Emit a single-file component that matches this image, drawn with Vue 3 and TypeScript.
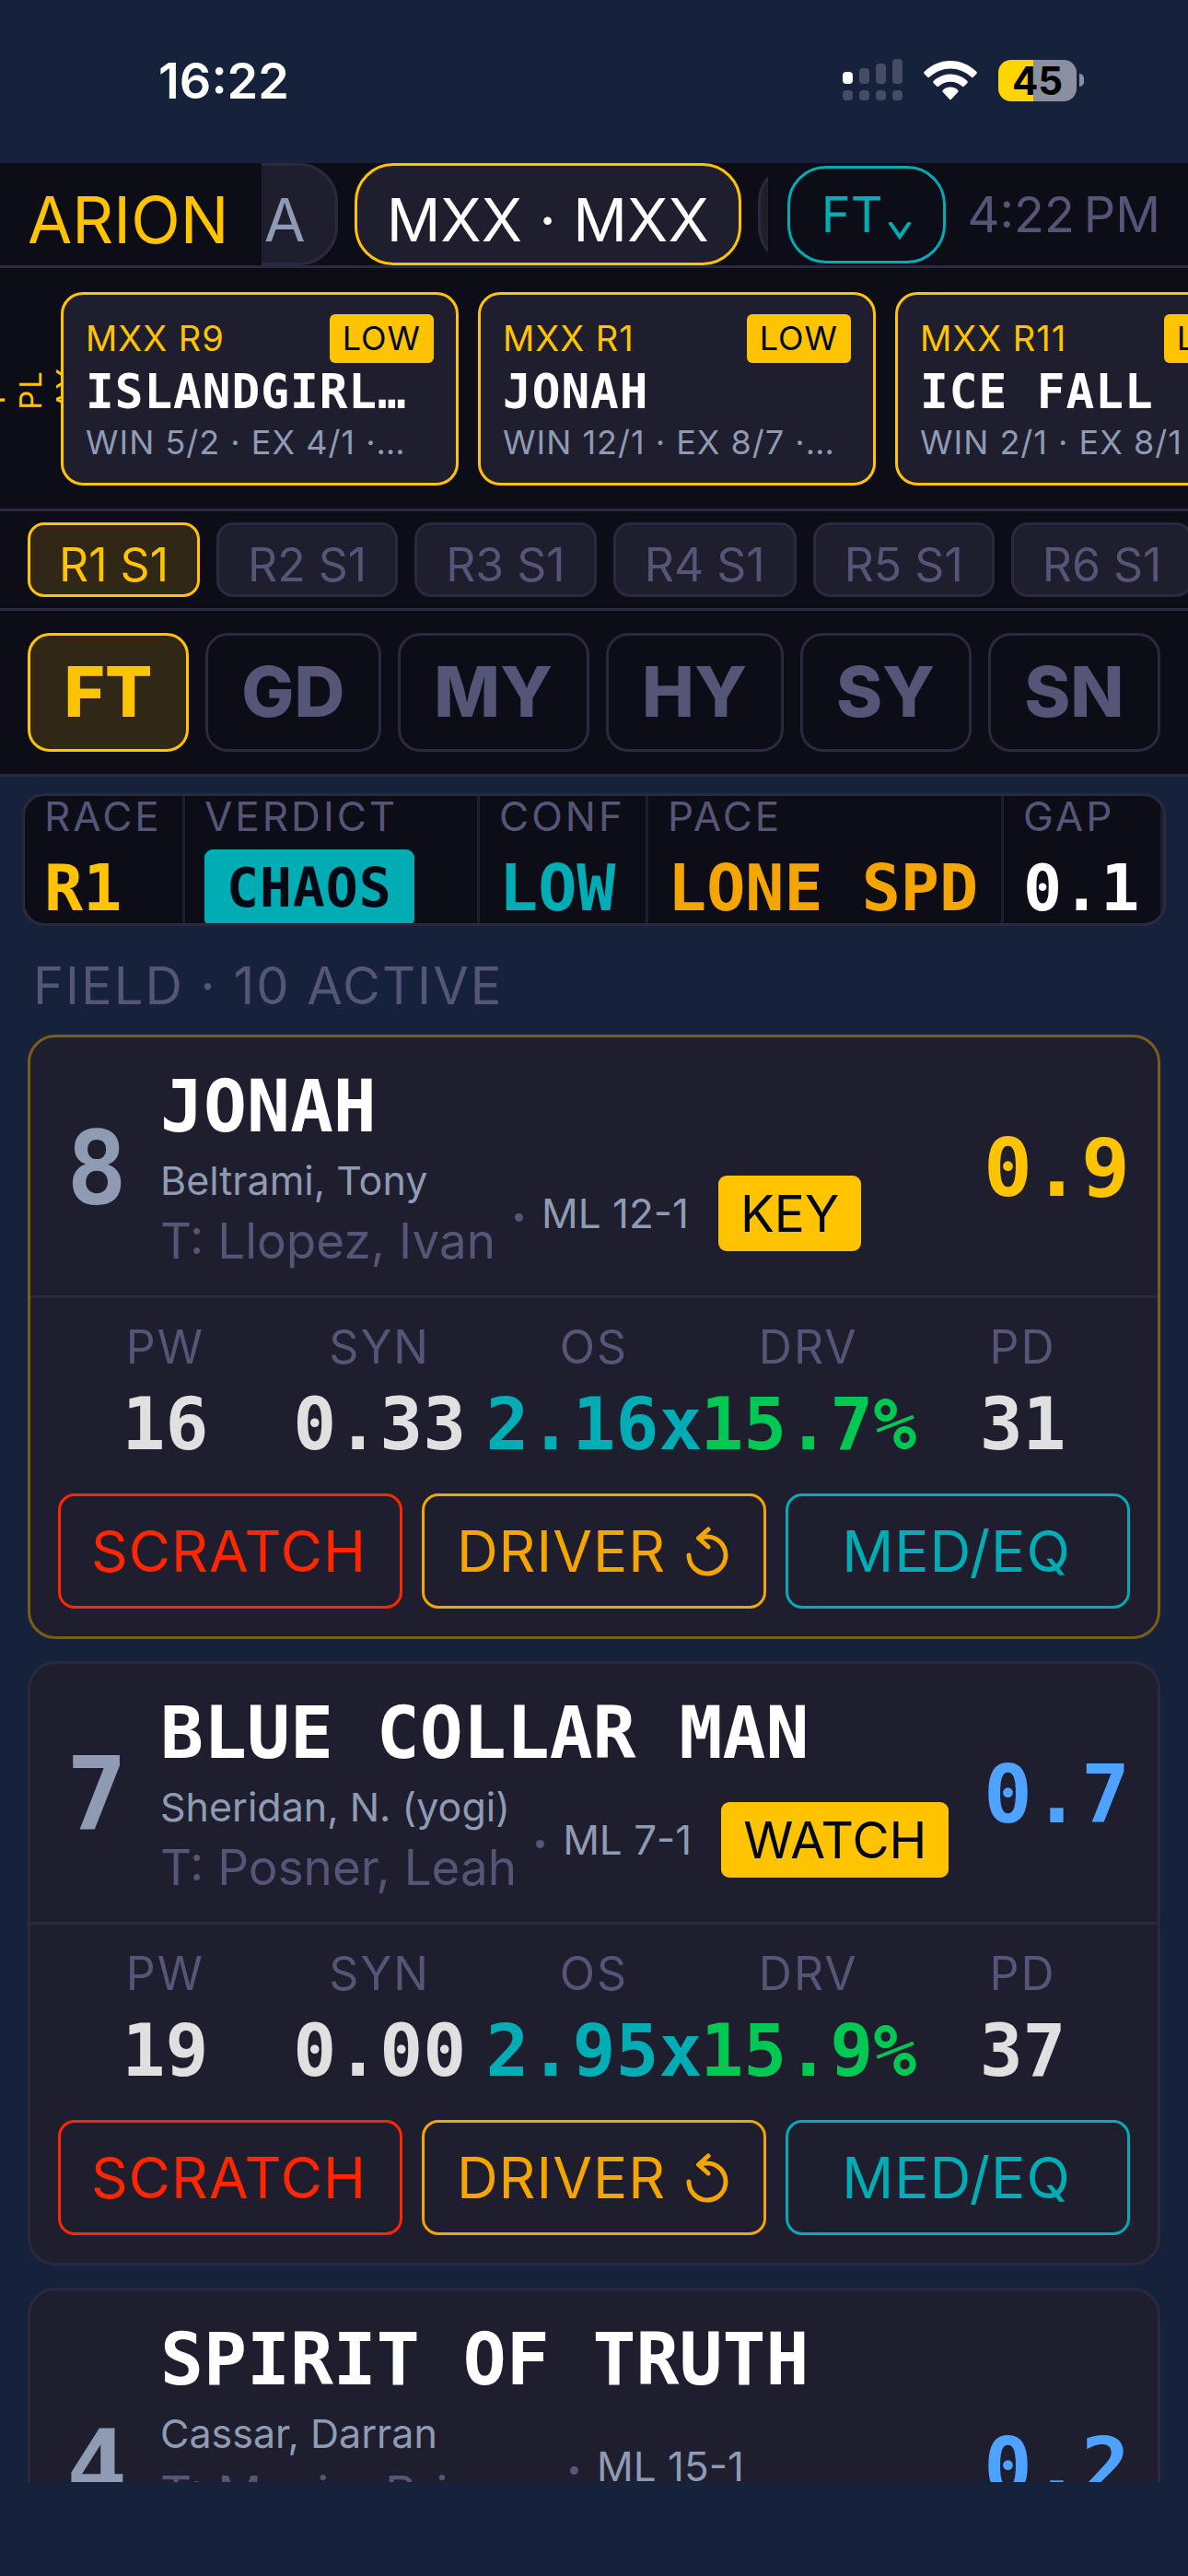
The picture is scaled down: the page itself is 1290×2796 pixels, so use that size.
<script setup lang="ts">
interface Pick { race: string; name: string; bet: string }
interface Horse {
  num: number; name: string; driver: string; trainer: string; ml: string; tag: string
  score: string; lead: boolean; pw: string; syn: string; os: string; drv: string; pd: string
}

const picks: Pick[] = [
  { race: 'MXX R9', name: 'ISLANDGIRL…', bet: 'WIN 5/2 · EX 4/1 ·…' },
  { race: 'MXX R1', name: 'JONAH', bet: 'WIN 12/1 · EX 8/7 ·…' },
  { race: 'MXX R11', name: 'ICE FALL', bet: 'WIN 2/1 · EX 8/1 ·…' },
]
const races = ['R1 S1', 'R2 S1', 'R3 S1', 'R4 S1', 'R5 S1', 'R6 S1']
const conditions = ['FT', 'GD', 'MY', 'HY', 'SY', 'SN']
const horses: Horse[] = [
  { num: 8, name: 'JONAH', driver: 'Beltrami, Tony', trainer: 'Llopez, Ivan', ml: '12-1', tag: 'KEY', score: '0.9', lead: true, pw: '16', syn: '0.33', os: '2.16x', drv: '15.7%', pd: '31' },
  { num: 7, name: 'BLUE COLLAR MAN', driver: 'Sheridan, N. (yogi)', trainer: 'Posner, Leah', ml: '7-1', tag: 'WATCH', score: '0.7', lead: false, pw: '19', syn: '0.00', os: '2.95x', drv: '15.9%', pd: '37' },
  { num: 4, name: 'SPIRIT OF TRUTH', driver: 'Cassar, Darran', trainer: 'Macie, Briarna', ml: '15-1', tag: 'WATCH', score: '0.2', lead: false, pw: '14', syn: '0.00', os: '1.80x', drv: '12.4%', pd: '28' },
]
</script>

<template>
  <div class="app">
    <div class="status">
      <span class="clock">16:22</span>
      <div class="indicators">
        <svg class="signal" width="66" height="46" viewBox="0 0 66 46" fill="#454d64">
          <rect x="0" y="14" width="11" height="13" rx="4" fill="#fff" />
          <rect x="18" y="10" width="11" height="17" rx="4" />
          <rect x="36" y="5" width="11" height="22" rx="4" />
          <rect x="54" y="0" width="11" height="27" rx="4" />
          <rect x="0" y="34" width="11" height="11" rx="4" />
          <rect x="18" y="34" width="11" height="11" rx="4" />
          <rect x="36" y="34" width="11" height="11" rx="4" />
          <rect x="54" y="34" width="11" height="11" rx="4" />
        </svg>
        <svg class="wifi" width="58" height="43" viewBox="0 0 58 43" fill="#fff">
          <path d="M29 0C40 0 50 4.500 57.300 11.800Q58.400 13 57.300 14.200L53.800 17.700Q52.800 18.600 51.700 17.600A33 33 0 0 0 6.300 17.600Q5.200 18.600 4.200 17.700L0.700 14.200Q-.4 13 .7 11.800C8 4.500 18 0 29 0Z" />
          <path d="M29 14.500C36 14.500 42.500 17.300 47.300 21.900Q48.400 23 47.300 24.200L43.700 27.700Q42.700 28.600 41.600 27.600A19 19 0 0 0 16.400 27.600Q15.300 28.600 14.300 27.700L10.700 24.200Q9.600 23 10.700 21.900C15.500 17.300 22 14.500 29 14.500Z" />
          <path d="M29 28.500C32 28.500 35 29.700 37.100 31.700Q38.300 32.900 37.100 34.100L30.200 41.600Q29 42.700 27.800 41.600L20.900 34.100Q19.700 32.900 20.900 31.700C23 29.700 26 28.500 29 28.500Z" />
        </svg>
        <div class="battery"><span class="cell">45</span><i class="nub"></i></div>
      </div>
    </div>

    <header class="top">
      <span class="brand">ARION</span>
      <nav class="tracks">
        <button class="track">MXX · A</button>
        <button class="track on">MXX · MXX</button>
        <button class="track">MXX</button>
      </nav>
      <button class="surface">FT<svg width="26" height="20" viewBox="0 0 26 20" fill="none" stroke="currentColor" stroke-width="4"><path d="M2 0 13 16 24 0" /></svg></button>
      <span class="now">4:22&#8201;PM</span>
    </header>

    <section class="picks">
      <div class="best"><span>T<br>PL<br>AY</span></div>
      <article v-for="p in picks" :key="p.race" class="pick">
        <div class="pick-top"><span>{{ p.race }}</span><b>LOW</b></div>
        <h3>{{ p.name }}</h3>
        <p>{{ p.bet }}</p>
      </article>
    </section>

    <nav class="races">
      <button v-for="(r, i) in races" :key="r" :class="{ on: i === 0 }">{{ r }}</button>
    </nav>

    <nav class="conditions">
      <button v-for="(c, i) in conditions" :key="c" :class="{ on: i === 0 }">{{ c }}</button>
    </nav>

    <section class="summary">
      <div><small>RACE</small><strong class="gold">R1</strong></div>
      <div><small>VERDICT</small><strong class="chaos">CHAOS</strong></div>
      <div><small>CONF</small><strong class="teal">LOW</strong></div>
      <div><small>PACE</small><strong class="orange">LONE SPD</strong></div>
      <div><small>GAP</small><strong>0.1</strong></div>
    </section>

    <h2 class="field">FIELD · 10 ACTIVE</h2>

    <main class="list">
      <article v-for="h in horses" :key="h.num" class="horse" :class="{ lead: h.lead }">
        <div class="head">
          <span class="num">{{ h.num }}</span>
          <div class="info">
            <h3>{{ h.name }}</h3>
            <div class="meta">
              <div class="people">
                <span class="driver">{{ h.driver }}</span>
                <span class="trainer">T: {{ h.trainer }}</span>
              </div>
              <i class="dot"></i>
              <span class="ml">ML {{ h.ml }}</span>
              <span class="tag">{{ h.tag }}</span>
            </div>
          </div>
          <span class="score">{{ h.score }}</span>
        </div>
        <dl class="stats">
          <div><dt>PW</dt><dd>{{ h.pw }}</dd></div>
          <div><dt>SYN</dt><dd>{{ h.syn }}</dd></div>
          <div><dt>OS</dt><dd class="teal">{{ h.os }}</dd></div>
          <div><dt>DRV</dt><dd class="green">{{ h.drv }}</dd></div>
          <div><dt>PD</dt><dd>{{ h.pd }}</dd></div>
        </dl>
        <div class="actions">
          <button class="red">SCRATCH</button>
          <button class="orange">DRIVER
            <svg width="46" height="54" viewBox="0 0 46 54" fill="none" stroke="currentColor" stroke-width="5" stroke-linecap="round" stroke-linejoin="round">
              <path d="M3 31A20 20 0 1 0 23 11Q18 11 13.500 12.500M24 3 13.500 12.500 24 22" />
            </svg>
          </button>
          <button class="teal">MED/EQ</button>
        </div>
      </article>
    </main>
  </div>
</template>

<style>
body { margin: 0; background: #16213c; }
</style>

<style scoped>
* { box-sizing: border-box; }
.app {
  height: 100vh; display: flex; flex-direction: column; overflow: hidden;
  padding-bottom: 102px; background: #16213c; color: #fff;
  font-family: Inter, "Liberation Sans", sans-serif; white-space: nowrap;
}
.app > * { flex: none; }
button { font: inherit; color: inherit; background: none; border: 3px solid; padding: 0; margin: 0; white-space: nowrap; }
h2, h3, p, dl, dd { margin: 0; font-weight: 400; }
.gold { color: #ffc300; }
.teal { color: #00adb5; }
.orange { color: #f4a500; }
.green { color: #00c853; }
.red { color: #ff2600; }

.status { height: 177px; display: flex; justify-content: space-between; align-items: center; padding: 0 113px 3px 172px; }
.clock { padding-top: 2px; font-size: 54px; font-weight: 600; line-height: 64px; }
.indicators { display: flex; align-items: center; }
.wifi { margin: 0 23px 0 22px; }
.battery { display: flex; align-items: center; gap: 3px; }
.cell {
  width: 85px; height: 45px; border-radius: 14px; text-align: center; line-height: 45px;
  background: linear-gradient(90deg, #ffd600 38px, #8b90a0 38px); color: #000; font-size: 42px; font-weight: 700;
}
.nub { width: 5px; height: 14px; border-radius: 0 5px 5px 0; background: #8b90a0; }

.top {
  display: flex; align-items: center; height: 114px; padding: 0 30px;
  background: #0d0d17; border-bottom: 3px solid #2b293e;
}
.brand { width: 254px; font-size: 70px; color: #ffc300; line-height: 90px; padding-top: 12px; }
.tracks { flex: 1; min-width: 0; display: flex; justify-content: center; gap: 18px; overflow: hidden; }
.track {
  flex: none; min-width: 246px; height: 111px; padding: 12px 32px 0; border-radius: 42px; border-color: #2b293e;
  background: #1f1e2e; color: #8e9bb3; font-size: 65px; line-height: 90px;
}
.track.on { border-color: #ffc300; color: #fff; }
.surface {
  height: 106px; margin-left: 21px; padding: 0 34px; border-radius: 42px; color: #00adb5;
  font-size: 54px; display: flex; align-items: center; gap: 5px;
}
.surface svg { margin-top: 36px; }
.now { margin-left: 24px; font-size: 54px; color: #555577; }

.picks {
  display: flex; align-items: center; gap: 21px; height: 264px; overflow: hidden;
  background: #0d0d17; border-bottom: 3px solid #2b293e;
}
.best { width: 66px; margin-right: -21px; flex: none; display: flex; justify-content: center; overflow: hidden; }
.best span {
  flex: none; writing-mode: vertical-rl; transform: rotate(180deg); font-size: 33px; line-height: 40px;
  letter-spacing: 2px; color: #ffc300;
}
.pick { flex: none; width: 432px; height: 210px; border: 3px solid #ffc300; border-radius: 24px; padding: 21px 24px; background: #1f1e2e; }
.pick-top { display: flex; justify-content: space-between; font-size: 38px; line-height: 53px; letter-spacing: 1px; color: #ffc300; }
.pick-top b { padding: 0 14px; border-radius: 6px; background: #ffc300; color: #000814; font-size: 36px; font-weight: 400; }
.pick h3 { font: 700 51px/63px "DejaVu Sans Mono", monospace; letter-spacing: 1px; }
.pick p { font-size: 36px; line-height: 46px; color: #8e9bb3; letter-spacing: 1px; overflow: hidden; }

.races {
  display: flex; gap: 18px; padding: 12px 30px; overflow: hidden;
  background: #0d0d17; border-bottom: 3px solid #2b293e;
}
.races button {
  flex: none; height: 81px; padding: 10px 31px 0; border-radius: 18px; border-color: #2b293e;
  background: #1f1e2e; color: #555577; font-size: 50px; line-height: 60px;
}
.races .on, .conditions .on { background: #302717; border-color: #ffc300; color: #ffc300; }

.conditions { display: flex; gap: 18px; padding: 24px 30px; background: #0d0d17; border-bottom: 3px solid #2b293e; }
.conditions button {
  flex: 1 1 auto; height: 129px; padding: 0 24px 3px; border-radius: 24px; border-color: #2b293e;
  color: #555577; font-size: 76px; font-weight: 800;
}

.summary {
  display: grid; grid-template-columns: 174fr 320fr 183fr 386fr 173fr; height: 144px;
  margin: 18px 24px 0; border: 3px solid #2b293e; border-radius: 24px; background: #0d0d17; overflow: hidden;
}
.summary > div { min-width: 0; padding-left: 21px; border-right: 3px solid #201e2c; }
.summary small { display: block; font-size: 44px; line-height: 45px; letter-spacing: 3px; color: #555577; }
.summary strong { display: block; font: 700 70px/110px "DejaVu Sans Mono", monospace; }
.summary .chaos {
  width: max-content; margin-top: 13px; padding: 0 24px; border-radius: 9px; background: #00adb5; color: #000814;
  font-size: 58px; line-height: 84px; letter-spacing: 1px;
}

.field { margin: 30px 36px 0; font-size: 56px; line-height: 70px; letter-spacing: 2px; color: #555577; }

.app > .list { flex: 1; min-height: 0; overflow: hidden; display: flex; flex-direction: column; gap: 24px; padding: 18px 30px 0; }
.horse { flex: none; border: 3px solid #2b293e; border-radius: 30px; background: #1f1e2e; }
.horse.lead { border-color: #7a5c1b; }
.head { display: flex; align-items: center; padding: 27px 30px 23px; border-bottom: 3px solid #2b293e; }
.num { width: 84px; margin-right: 27px; text-align: center; font: 700 110px/120px "DejaVu Sans Mono", monospace; color: #8e9bb3; }
.info { flex: 1; min-width: 0; }
.info h3 { font: 700 78px/96px "DejaVu Sans Mono", monospace; }
.meta { display: flex; flex-wrap: wrap; align-items: center; row-gap: 18px; padding-top: 2px; }
.people { display: flex; flex-direction: column; }
.driver { font-size: 43px; line-height: 60px; color: #8e9bb3; }
.trainer { font-size: 53px; line-height: 72px; color: #555577; }
.dot { width: 9px; height: 9px; margin: 8px 20px 0 21px; border-radius: 50%; background: #555577; }
.ml { font-size: 44px; color: #8e9bb3; }
.tag { margin-left: 32px; padding: 0 24px; border-radius: 9px; background: #ffc300; color: #000814; font-size: 55px; line-height: 82px; }
.score { margin-left: 18px; font: 700 88px/100px "DejaVu Sans Mono", monospace; color: #4da3ff; }
.lead .score { color: #ffc300; }
.stats { display: grid; grid-template-columns: repeat(5, minmax(0, 1fr)); padding: 21px 30px 0; }
.stats > div { display: flex; flex-direction: column; align-items: center; }
.stats dt { font-size: 50px; line-height: 64px; letter-spacing: 2px; color: #555577; }
.stats dd { font: 700 78px/104px "DejaVu Sans Mono", monospace; }
.stats dd:not([class]) { color: #e0e0e0; }
.actions { display: grid; grid-template-columns: repeat(3, minmax(0, 1fr)); gap: 21px; padding: 23px 30px 30px; }
.actions button { display: flex; align-items: center; justify-content: center; gap: 22px; height: 125px; padding-right: 3px; border-radius: 18px; font-size: 62px; letter-spacing: 1px; }
</style>
